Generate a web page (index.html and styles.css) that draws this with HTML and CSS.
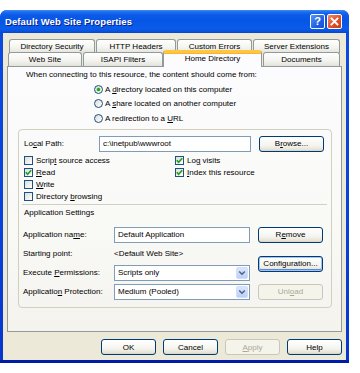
FILE: index.html
```html
<!DOCTYPE html>
<html>
<head>
<meta charset="utf-8">
<title>Default Web Site Properties</title>
<link rel="stylesheet" href="styles.css">
</head>
<body>
<div class="window">
  <div class="titlebar">
    <span class="title">Default Web Site Properties</span>
    <div class="tbtns">
      <span class="tbtn help">?</span>
      <span class="tbtn close"><svg width="13" height="13" viewBox="0 0 13 13"><path d="M3.5 3.5 L9.5 9.5 M9.5 3.5 L3.5 9.5" stroke="#fff" stroke-width="1.8" stroke-linecap="square"/></svg></span>
    </div>
  </div>
  <div class="client">
    <div class="tabs">
      <div class="tabrow row1">
        <div class="tab t-dirsec">Directory Security</div>
        <div class="tab t-http">HTTP Headers</div>
        <div class="tab t-custom">Custom Errors</div>
        <div class="tab t-server">Server Extensions</div>
      </div>
      <div class="tabrow row2">
        <div class="tab t-web">Web Site</div>
        <div class="tab t-isapi">ISAPI Filters</div>
        <div class="tab active t-home">Home Directory</div>
        <div class="tab t-docs">Documents</div>
      </div>
    </div>
    <div class="panel">
      <p class="intro">When connecting to this resource, the content should come from:</p>
      <div class="radios">
        <div class="radio"><span class="rb on"></span><span>A <u>d</u>irectory located on this computer</span></div>
        <div class="radio"><span class="rb"></span><span>A <u>s</u>hare located on another computer</span></div>
        <div class="radio"><span class="rb"></span><span>A redirection to a <u>U</u>RL</span></div>
      </div>
      <div class="group">
        <div class="pathrow">
          <span class="plabel">Lo<u>c</u>al Path:</span>
          <span class="input pathinput">c:\inetpub\wwwroot</span>
          <span class="btn">B<u>r</u>owse...</span>
        </div>
        <div class="checks">
          <div class="check"><span class="cb"></span><span>Scrip<u>t</u> source access</span></div>
          <div class="check"><span class="cb on"><svg width="9" height="9" viewBox="0 0 9 9"><path d="M1.8 4.2 L3.6 6.3 L7.2 2.2" fill="none" stroke="#21a121" stroke-width="1.7"/></svg></span><span>Lo<u>g</u> visits</span></div>
          <div class="check"><span class="cb on"><svg width="9" height="9" viewBox="0 0 9 9"><path d="M1.8 4.2 L3.6 6.3 L7.2 2.2" fill="none" stroke="#21a121" stroke-width="1.7"/></svg></span><span><u>R</u>ead</span></div>
          <div class="check"><span class="cb on"><svg width="9" height="9" viewBox="0 0 9 9"><path d="M1.8 4.2 L3.6 6.3 L7.2 2.2" fill="none" stroke="#21a121" stroke-width="1.7"/></svg></span><span><u>I</u>ndex this resource</span></div>
          <div class="check"><span class="cb"></span><span><u>W</u>rite</span></div>
          <div class="check empty"></div>
          <div class="check"><span class="cb"></span><span>Directory <u>b</u>rowsing</span></div>
        </div>
        <div class="sep"></div>
        <div class="apphead">Application Settings</div>
        <div class="app">
          <div class="appgrid">
            <span class="alabel">Application na<u>m</u>e:</span>
            <span class="input">Default Application</span>
            <span class="alabel">Starting point:</span>
            <span class="value">&lt;Default Web Site&gt;</span>
            <span class="alabel">Execute <u>P</u>ermissions:</span>
            <span class="input select"><span>Scripts only</span><span class="arrow"><svg width="8" height="6" viewBox="0 0 8 6"><path d="M1.2 1.5 L4 4.2 L6.8 1.5" fill="none" stroke="#4d6185" stroke-width="1.5"/></svg></span></span>
            <span class="alabel">Applicatio<u>n</u> Protection:</span>
            <span class="input select"><span>Medium (Pooled)</span><span class="arrow"><svg width="8" height="6" viewBox="0 0 8 6"><path d="M1.2 1.5 L4 4.2 L6.8 1.5" fill="none" stroke="#4d6185" stroke-width="1.5"/></svg></span></span>
          </div>
          <div class="appbtns">
            <span class="btn">R<u>e</u>move</span>
            <span class="btn focus b-config"><span class="focusrect">Configuration...</span></span>
            <span class="btn disabled b-unload">Unl<u>o</u>ad</span>
          </div>
        </div>
      </div>
    </div>
    <div class="footer">
      <span class="btn fbtn">OK</span>
      <span class="btn fbtn">Cancel</span>
      <span class="btn fbtn disabled"><u>A</u>pply</span>
      <span class="btn fbtn">Help</span>
    </div>
  </div>
</div>
</body>
</html>
```

FILE: styles.css
```css
* { box-sizing: border-box; }
html, body { margin: 0; padding: 0; }
body {
  width: 360px;
  height: 373px;
  background: #ffffff;
  font-family: "Liberation Sans", Arial, sans-serif;
  font-size: 8px;
  color: #000;
  overflow: hidden;
}
u { text-decoration: underline; text-underline-offset: 1px; }

.window {
  margin-top: 10px;
  width: 349px;
  height: 353px;
  border-radius: 7px 7px 0 0;
  background: linear-gradient(#0a4be0, #0842dc 60%, #0636cc);
  border-bottom: 3px solid #001ca4;
  display: flex;
  flex-direction: column;
}

.titlebar {
  height: 23px;
  border-radius: 7px 7px 0 0;
  background: linear-gradient(#3d8ef6 0, #1d6cf0 2px, #0b5be8 5px, #0655e6 45%, #0a5ce9 80%, #0a52e0 92%, #0644d0 100%);
  display: flex;
  align-items: center;
  justify-content: space-between;
  padding: 0 7px 0 5px;
}
.title {
  color: #fff;
  font-weight: bold;
  font-size: 9.5px;
  letter-spacing: 0.1px;
  text-shadow: 1px 1px 0 #0a1e8c;
  margin-top: 0;
}
.tbtns { display: flex; gap: 2px; }
.tbtn {
  width: 15px;
  height: 15px;
  border: 1px solid #fff;
  border-radius: 2px;
  display: flex;
  align-items: center;
  justify-content: center;
  color: #fff;
  font-weight: bold;
}
.help {
  background: linear-gradient(135deg, #5b95f7, #2160e4 60%, #1a4fd2);
  font-size: 11px;
  font-family: "Liberation Sans", Arial, sans-serif;
  line-height: 1;
}
.close {
  background: linear-gradient(135deg, #f08a66, #e2502c 55%, #c83a18);
}

.client {
  flex: 1;
  margin: 0 3px;
  background: #ece9d8;
  padding: 6px 4px 0 4px;
  display: flex;
  flex-direction: column;
}

.tabs { height: 27px; }
.tabrow { display: flex; align-items: flex-start; }
.row1 { height: 13px; margin-left: 2px; }
.row2 { height: 14px; margin-left: 1px; }
.tab {
  height: 14px;
  border: 1px solid #919b9c;
  border-bottom: none;
  border-radius: 3px 3px 0 0;
  background: linear-gradient(#ffffff, #f3f3ef 60%, #e3e2da);
  text-align: center;
  line-height: 13px;
  white-space: nowrap;
}
.row1 .tab { height: 14px; }
.t-dirsec { width: 86px; }
.t-http { width: 80px; margin-left: 1px; }
.t-custom { width: 75px; margin-left: 1px; }
.t-server { width: 87px; margin-left: 1px; }
.t-web { width: 74px; }
.t-isapi { width: 80px; margin-left: 1px; }
.t-home { width: 99px; }
.t-docs { width: 77px; margin-left: 1px; }
.tab.active {
  position: relative;
  z-index: 2;
  height: 17px;
  margin-top: -2px;
  background: #fcfcfe;
  border-top: 3px solid #ffc83c;
  border-radius: 3px 3px 0 0;
  line-height: 11px;
  box-shadow: inset 0 1px 0 #f6b342;
}

.panel {
  height: 266px;
  border: 1px solid #919b9c;
  background: linear-gradient(#fcfcfe, #f9f9f6 60%, #f4f3ee);
  padding: 3px 0 0 0;
}
.intro {
  margin: 0 0 0 18px;
  line-height: 10px;
  white-space: nowrap;
}
.radios {
  margin: 2px 0 0 86px;
}
.radio {
  height: 14.5px;
  display: flex;
  align-items: center;
  gap: 2px;
  white-space: nowrap;
}
.rb {
  width: 9px;
  height: 9px;
  border: 1px solid #1c5180;
  border-radius: 50%;
  background: linear-gradient(135deg, #dcdcd7, #fff);
  display: flex;
  align-items: center;
  justify-content: center;
}
.rb.on::after {
  content: "";
  width: 3px;
  height: 3px;
  border-radius: 50%;
  background: #21a121;
  box-shadow: 0 0 0 0.5px #5ecf5e;
}

.group {
  margin: 3px 9px 0 10px;
  border: 1px solid #d0d0bf;
  border-radius: 4px;
  padding: 6px 7px 7px 5px;
}
.pathrow {
  display: flex;
  align-items: center;
  height: 16px;
}
.plabel { width: 75px; }
.input {
  height: 16px;
  border: 1px solid #7f9db9;
  background: #fff;
  padding-left: 3px;
  display: flex;
  align-items: center;
  white-space: nowrap;
}
.pathinput { width: 152px; margin-right: 8px; }
.btn {
  width: 65px;
  height: 16px;
  border: 1px solid #003c74;
  border-radius: 3px;
  background: linear-gradient(#ffffff, #f5f4ef 60%, #e6e3d6 90%, #d6d0c5);
  display: flex;
  align-items: center;
  justify-content: center;
  white-space: nowrap;
}
.btn.disabled {
  border-color: #c9c7ba;
  background: #f5f4ea;
  color: #aca899;
}
.btn.focus {
  box-shadow: inset 0 0 0 1px #a6c4f0, inset 0 -1px 0 1px #5a86de;
}
.focusrect { padding: 0 1px; }

.checks {
  margin-top: 3px;
  display: grid;
  grid-template-columns: 151px auto;
  grid-auto-rows: 12px;
}
.check {
  display: flex;
  align-items: center;
  gap: 3px;
  white-space: nowrap;
}
.cb {
  width: 9px;
  height: 9px;
  border: 1px solid #1c5180;
  background: linear-gradient(135deg, #dcdcd7, #fff);
  display: flex;
  align-items: center;
  justify-content: center;
}
.cb svg { display: block; flex: none; }

.sep {
  margin: 1px -3px 0 -2px;
  border-top: 1px solid #d0d0bf;
}
.apphead {
  margin-top: 3px;
  line-height: 10px;
}
.app {
  margin-top: 9px;
  display: flex;
  gap: 8px;
}
.appgrid {
  display: grid;
  grid-template-columns: 91px 136px;
  grid-auto-rows: 16px;
  row-gap: 3px;
  align-items: center;
  margin-left: -1px;
}
.value { padding-left: 0; white-space: nowrap; }
.select {
  justify-content: space-between;
  padding-right: 1px;
}
.arrow {
  width: 12px;
  height: 12px;
  border: 1px solid #d2defa;
  border-radius: 2px;
  background: linear-gradient(#dae6fd, #bcd0f8);
  display: flex;
  align-items: center;
  justify-content: center;
}
.appbtns {
  display: flex;
  flex-direction: column;
}
.b-config { margin-top: 13px; }
.b-unload { margin-top: 12px; }

.footer {
  display: flex;
  justify-content: flex-end;
  gap: 7px;
  padding-top: 7px;
}
.fbtn { width: 55px; }
```
